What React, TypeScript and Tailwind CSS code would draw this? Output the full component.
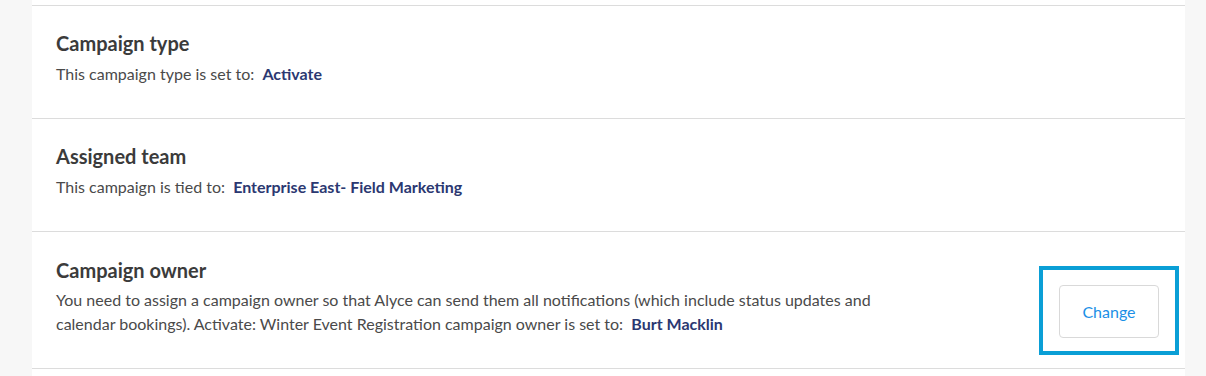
import type { ReactNode } from "react"

function Value({ children }: { children: ReactNode }) {
  return <span className="font-bold text-[#2b3871]">{children}</span>
}

function Section({ title, children, className }: { title: string; children: ReactNode; className: string }) {
  return (
    <div className={`border-t border-[#dcdcdc] pl-6 pr-6 ${className}`}>
      <div className="w-[840px]">
        <h3 className="text-[20px] leading-6 font-bold text-[#3b3b3b]">{title}</h3>
        <p className="mt-[7px] text-[16px] leading-6 text-[#4a4a4a]">{children}</p>
      </div>
    </div>
  )
}

export default function App() {
  return (
    <div className="flex h-[376px] w-[1206px] bg-[#f7f7f7] font-['Lato',sans-serif]">
      <div className="w-8 shrink-0" />
      <div className="w-[1153px] bg-white">
        <div className="h-[5px]" />

        <Section title="Campaign type" className="pt-[25px] pb-[32px]">
          This campaign type is set to:{"\u00a0\u00a0"}<Value>Activate</Value>
        </Section>

        <Section title="Assigned team" className="pt-[25px] pb-[32px]">
          This campaign is tied to:{"\u00a0\u00a0"}<Value>Enterprise East- Field Marketing</Value>
        </Section>

        <div className="border-t border-[#dcdcdc] pl-6 pr-[6px] pt-[26px] pb-[13px]">
          <div className="flex items-start justify-between">
            <div className="w-[840px]">
              <h3 className="text-[20px] leading-6 font-bold text-[#3b3b3b]">Campaign owner</h3>
              <p className="mt-[6px] text-[16px] leading-6 text-[#4a4a4a]">
                You need to assign a campaign owner so that Alyce can send them all notifications (which include
                status updates and calendar bookings). Activate: Winter Event Registration campaign owner is set
                to:{"\u00a0\u00a0"}<Value>Burt Macklin</Value>
              </p>
            </div>
            {/* highlight around the action */}
            <div className="mt-[8px] border-4 border-[#0a9fd6] px-4 pt-[15px] pb-[13px]">
              <button
                type="button"
                className="flex h-[53px] w-[100px] items-center justify-center rounded border border-[#d9d9d9] bg-white text-[16px] text-[#1b8fe6]"
              >
                Change
              </button>
            </div>
          </div>
        </div>

        <div className="border-t border-[#dcdcdc]" />
      </div>
    </div>
  )
}
